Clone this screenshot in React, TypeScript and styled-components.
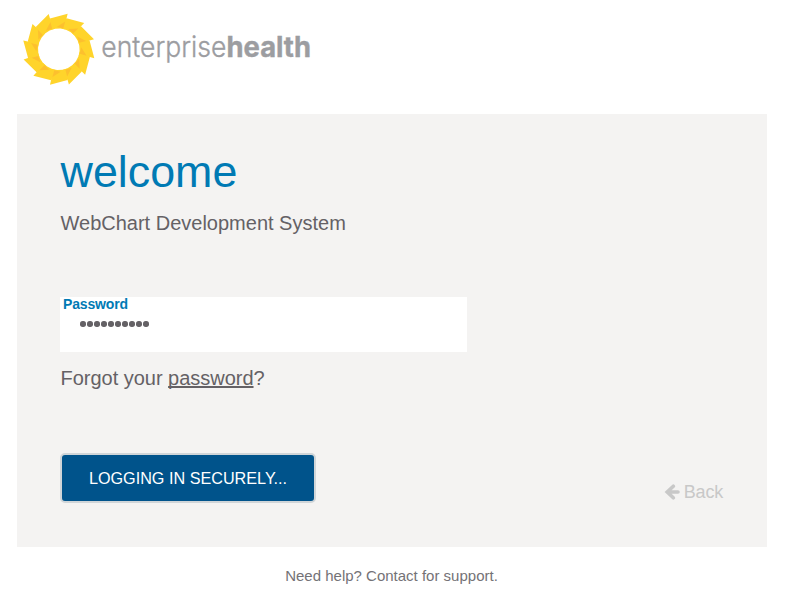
import React from "react";
import styled, { createGlobalStyle } from "styled-components";

const GlobalStyle = createGlobalStyle`
  * { box-sizing: border-box; }
  body {
    margin: 0;
    background: #fff;
    color: #646165;
    font-family: "Liberation Sans", Arial, Helvetica, sans-serif;
    overflow: hidden;
  }
`;

const Page = styled.div`
  width: 790px;
  height: 592px;
  padding: 0 23px 0 17px;
  display: flex;
  flex-direction: column;
`;

const Header = styled.header`
  height: 114px;
  padding-top: 8px;
`;

const LogoSvg = styled.svg`
  display: block;
`;

const LogoText = styled.text<{ $bold?: boolean }>`
  font-family: Inter, "Liberation Sans", sans-serif;
  font-size: ${(p) => (p.$bold ? 28 : 28.5)}px;
  font-weight: ${(p) => (p.$bold ? 700 : 300)};
  fill: #9c9da1;
  stroke: #9c9da1;
  stroke-width: ${(p) => (p.$bold ? 0.4 : 0.35)};
`;

const Card = styled.main`
  height: 433px;
  padding: 32px 44px 0 43px;
  background: #f4f3f2;
  display: flex;
  flex-direction: column;
`;

const Title = styled.h1`
  margin: 0;
  height: 65px;
  padding-left: 0.6px;
  font-size: 44.8px;
  line-height: 51px;
  font-weight: 400;
  color: #007ab4;
`;

const Subtitle = styled.p`
  margin: 0;
  height: 86px;
  padding-left: 0.5px;
  font-size: 20px;
  line-height: 24px;
`;

const Field = styled.label`
  width: 407px;
  height: 55px;
  background: #fff;
  display: flex;
  flex-direction: column;
`;

const FieldLabel = styled.span`
  padding-left: 3px;
  font-size: 14px;
  line-height: 15px;
  letter-spacing: -0.15px;
  font-weight: 700;
  color: #007ab4;
`;

const PasswordDots = styled.span`
  display: flex;
  gap: 1px;
  padding: 9px 0 0 20.4px;
`;

const Dot = styled.i`
  width: 6px;
  height: 6px;
  border-radius: 2.7px;
  background: #646165;
`;

const Forgot = styled.p`
  margin: 14px 0 0;
  height: 87px;
  padding-left: 0.5px;
  font-size: 20px;
  line-height: 24px;
  letter-spacing: -0.02px;
`;

const ForgotLink = styled.a`
  text-decoration: underline;
  text-decoration-thickness: 2px;
  text-underline-offset: 1px;
  text-decoration-skip-ink: none;
`;

const Actions = styled.div`
  display: flex;
  justify-content: space-between;
`;

const SubmitButton = styled.button`
  width: 256px;
  height: 50px;
  padding: 1px 0 0;
  border: 2px solid #d0d5d8;
  border-radius: 5px;
  background: #00538b;
  color: #fff;
  font: 400 16.2px/45px "Liberation Sans", Arial, sans-serif;
`;

const BackLink = styled.a`
  display: flex;
  align-items: center;
  gap: 4px;
  height: 24px;
  margin-top: 27px;
  font-size: 18px;
  line-height: 24px;
  letter-spacing: -0.2px;
  color: #c8c8c8;
`;

const Footer = styled.footer`
  padding: 20px 1px 0 0;
  text-align: center;
  font-size: 15px;
  line-height: 18px;
  color: #747276;
`;

const blades = Array.from({ length: 12 }, (_, i) => 14 + i * 30);

const polar = (angle: number, radius: number) => {
  const rad = (angle * Math.PI) / 180;
  return `${(radius * Math.sin(rad)).toFixed(2)},${(-radius * Math.cos(rad)).toFixed(2)}`;
};

const points = (...coords: [number, number][]) => coords.map(([a, r]) => polar(a, r)).join(" ");

const Logo = () => (
  <LogoSvg width="310" height="84" viewBox="0 0 310 84" role="img" aria-label="enterprisehealth">
    <g transform="translate(41.8 41.3)">
      {blades.map((a) => (
        <polygon
          key={a}
          fill="#ffd42b"
          points={points([a - 30, 32], [a, 36.6], [a, 32], [a + 5, 21], [a - 10, 20.8], [a - 24, 20.8], [a - 36, 21])}
        />
      ))}
      {blades.map((a) => (
        <polygon key={a} fill="#fdc02e" points={points([a - 1, 28.5], [a - 19, 22.5], [a - 2, 21.5])} />
      ))}
    </g>
    <LogoText x="84.3" y="49.3" textLength="125" lengthAdjust="spacingAndGlyphs">enterprise</LogoText>
    <LogoText $bold x="209.5" y="49.3" textLength="84.5" lengthAdjust="spacingAndGlyphs">health</LogoText>
  </LogoSvg>
);

const BackArrow = () => (
  <svg width="16" height="16" viewBox="0 0 16 16" fill="none" stroke="#c8c8c8" strokeWidth="3.6">
    <path d="M9.3 2.2 3.2 8l6.1 5.8M4 8h10" strokeLinecap="round" strokeLinejoin="miter" />
  </svg>
);

export default function App() {
  return (
    <>
      <GlobalStyle />
      <Page>
        <Header>
          <Logo />
        </Header>
        <Card>
          <Title>welcome</Title>
          <Subtitle>WebChart Development System</Subtitle>
          <Field>
            <FieldLabel>Password</FieldLabel>
            <PasswordDots>
              {Array.from({ length: 10 }, (_, i) => (
                <Dot key={i} />
              ))}
            </PasswordDots>
          </Field>
          <Forgot>
            Forgot your <ForgotLink>password</ForgotLink>?
          </Forgot>
          <Actions>
            <SubmitButton>LOGGING IN SECURELY...</SubmitButton>
            <BackLink>
              <BackArrow />
              Back
            </BackLink>
          </Actions>
        </Card>
        <Footer>Need help? Contact for support.</Footer>
      </Page>
    </>
  );
}
